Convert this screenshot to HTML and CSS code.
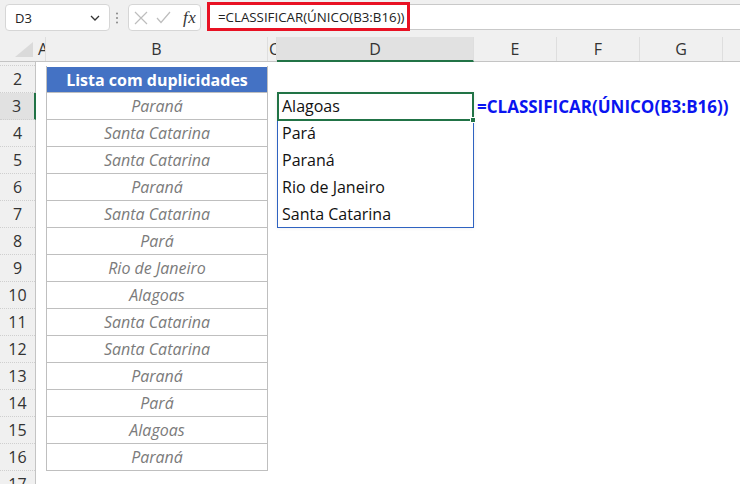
FILE: index.html
```html
<!DOCTYPE html>
<html lang="pt">
<head>
<meta charset="utf-8">
<title>CLASSIFICAR ÚNICO</title>
<link rel="stylesheet" href="styles.css">
</head>
<body>
<div class="app">
  <div class="toolbar">
    <div class="namebox">
      <span class="nb-text">D3</span>
      <svg class="chev" width="10" height="6" viewBox="0 0 10 6"><path d="M1 1 L5 5 L9 1" fill="none" stroke="#333" stroke-width="1.3"/></svg>
    </div>
    <svg class="vdots" width="4" height="12" viewBox="0 0 4 12"><circle cx="2" cy="1.5" r="1" fill="#888"/><circle cx="2" cy="6" r="1" fill="#888"/><circle cx="2" cy="10.5" r="1" fill="#888"/></svg>
    <div class="fxbox">
      <svg class="ico" width="14" height="14" viewBox="0 0 14 14"><path d="M1 1 L13 13 M13 1 L1 13" stroke="#bdbdbd" stroke-width="1.2" fill="none"/></svg>
      <svg class="ico" width="15" height="13" viewBox="0 0 15 13"><path d="M1 7 L5 11.5 L14 1" stroke="#bdbdbd" stroke-width="1.2" fill="none"/></svg>
      <span class="fx">fx</span>
    </div>
    <div class="fbar">
      <div class="fhl">=CLASSIFICAR(ÚNICO(B3:B16))</div>
    </div>
  </div>

  <div class="colheads">
    <div class="corner"><span class="tri"></span></div>
    <div class="ch ch-a"><span>A</span></div>
    <div class="ch ch-b">B</div>
    <div class="ch ch-c"><span>C</span></div>
    <div class="ch ch-d sel">D</div>
    <div class="ch ch-e">E</div>
    <div class="ch ch-f">F</div>
    <div class="ch ch-g">G</div>
    <div class="ch ch-h"></div>
  </div>

  <div class="body">
    <div class="rowheads">
      <div class="rh rh1"></div>
      <div class="rh">2</div>
      <div class="rh sel">3</div>
      <div class="rh">4</div>
      <div class="rh">5</div>
      <div class="rh">6</div>
      <div class="rh">7</div>
      <div class="rh">8</div>
      <div class="rh">9</div>
      <div class="rh">10</div>
      <div class="rh">11</div>
      <div class="rh">12</div>
      <div class="rh">13</div>
      <div class="rh">14</div>
      <div class="rh">15</div>
      <div class="rh">16</div>
      <div class="rh">17</div>
    </div>
    <div class="sheet">
      <div class="tbl">
        <div class="th">Lista com duplicidades</div>
        <div class="td">Paraná</div>
        <div class="td">Santa Catarina</div>
        <div class="td">Santa Catarina</div>
        <div class="td">Paraná</div>
        <div class="td">Santa Catarina</div>
        <div class="td">Pará</div>
        <div class="td">Rio de Janeiro</div>
        <div class="td">Alagoas</div>
        <div class="td">Santa Catarina</div>
        <div class="td">Santa Catarina</div>
        <div class="td">Paraná</div>
        <div class="td">Pará</div>
        <div class="td">Alagoas</div>
        <div class="td">Paraná</div>
      </div>
      <div class="spill">
        <div class="sc active">Alagoas<span class="handle"></span></div>
        <div class="sc">Pará</div>
        <div class="sc">Paraná</div>
        <div class="sc">Rio de Janeiro</div>
        <div class="sc">Santa Catarina</div>
      </div>
      <div class="note">=CLASSIFICAR(ÚNICO(B3:B16))</div>
    </div>
  </div>
</div>
</body>
</html>
```

FILE: styles.css
```css
* { box-sizing: border-box; }
html, body { margin: 0; padding: 0; }
body {
  width: 740px;
  height: 484px;
  overflow: hidden;
  background: #ffffff;
  font-family: "Open Sans", "Noto Sans", sans-serif;
  color: #222;
}
.app { width: 740px; height: 484px; overflow: hidden; }

/* toolbar */
.toolbar {
  height: 37px;
  background: #f0f0f0;
  display: flex;
  align-items: flex-start;
  padding: 4px 0 0 5px;
}
.namebox {
  width: 105px;
  height: 27px;
  background: #fff;
  border: 1px solid #d6d6d6;
  border-radius: 4px;
  display: flex;
  align-items: center;
  justify-content: space-between;
  padding: 0 9px 0 9px;
  font-size: 13px;
  color: #222;
}
.chev { margin-top: 1px; }
.vdots { margin: 8px 9px 0 5px; }
.fxbox {
  width: 73px;
  height: 27px;
  background: #fff;
  border: 1px solid #d6d6d6;
  border-radius: 4px;
  display: flex;
  align-items: center;
  padding: 0 0 0 5px;
  gap: 8px;
}
.fx {
  font-family: "Liberation Serif", serif;
  font-style: italic;
  font-size: 17px;
  color: #333;
  margin-left: 4px;
  letter-spacing: 0.5px;
}
.fbar {
  flex: 1;
  margin-left: 6px;
  height: 26px;
  background: #fff;
  border-top: 1px solid #c9c9c9;
  border-bottom: 1px solid #c9c9c9;
  display: flex;
}
.fhl {
  margin-top: -3px;
  height: 29px;
  width: 203px;
  border: 3px solid #e81123;
  padding: 0 0 0 8px;
  display: flex;
  align-items: center;
  font-size: 13.3px;
  color: #222;
  white-space: nowrap;
}

/* column headers */
.colheads {
  height: 25px;
  display: flex;
  background: #f0f0f0;
  border-bottom: 1px solid #c4c4c4;
}
.corner {
  width: 36px;
  position: relative;
}
.tri {
  position: absolute;
  right: 3px;
  bottom: 4px;
  width: 0;
  height: 0;
  border-left: 18px solid transparent;
  border-bottom: 15px solid #dadada;
}
.ch {
  font-size: 16px;
  color: #333;
  display: flex;
  align-items: center;
  justify-content: center;
  overflow: hidden;
  white-space: nowrap;
  border-right: 1px solid #dedede;
  background: #f0f0f0;
}
.ch-a { width: 10px; justify-content: flex-start; }
.ch-a span { margin-left: 2px; }
.ch-b { width: 222px; }
.ch-c { width: 9px; justify-content: flex-start; }
.ch-c span { margin-left: 1px; }
.ch-d { width: 197px; }
.ch-e, .ch-f, .ch-g { width: 83px; }
.ch-h { flex: 1; border-right: none; }
.ch.sel {
  background: #e1e1e1;
  border-bottom: 2px solid #217346;
  margin-bottom: -1px;
}

/* body */
.body { display: flex; }
.rowheads {
  width: 36px;
  background: #f0f0f0;
  border-right: 1px solid #c4c4c4;
  display: flex;
  flex-direction: column;
}
.rh {
  height: 27px;
  font-size: 16px;
  color: #333;
  display: flex;
  align-items: center;
  justify-content: center;
  border-bottom: 1px dotted #cfcfcf;
}
.rh1 { height: 4px; }
.rh.sel {
  background: #e1e1e1;
  border-right: 2px solid #217346;
  margin-right: -1px;
  padding-right: 1px;
}

.sheet {
  flex: 1;
  display: grid;
  grid-template-columns: 10px 222px 9px 197px 83px 83px 83px 1fr;
  grid-template-rows: 4px repeat(16, 27px);
}
.tbl {
  grid-column: 2;
  grid-row: 2 / span 15;
  border-left: 1px solid #bfbfbf;
  border-right: 1px solid #bfbfbf;
  display: flex;
  flex-direction: column;
}
.th {
  height: 27px;
  background: #4472c4;
  color: #fff;
  font-weight: 700;
  font-size: 16px;
  display: flex;
  align-items: center;
  justify-content: center;
  border-top: 1px solid #ffffff;
  border-bottom: 1px solid #bfbfbf;
  white-space: nowrap;
}
.td {
  height: 27px;
  font-style: italic;
  font-size: 16px;
  color: #7b7b7b;
  display: flex;
  align-items: center;
  justify-content: center;
  border-bottom: 1px solid #bfbfbf;
  white-space: nowrap;
}
.spill {
  grid-column: 4;
  grid-row: 3 / span 5;
  border: 1px solid #2f63c1;
  border-top: none;
  box-shadow: 0 0 4px rgba(0, 0, 0, 0.08);
  display: flex;
  flex-direction: column;
}
.sc {
  height: 27px;
  font-size: 16px;
  color: #111;
  display: flex;
  align-items: center;
  padding-left: 4px;
  white-space: nowrap;
}
.sc.active {
  position: relative;
  height: 29px;
  margin: -1px -1px -1px -1px;
  border: 2px solid #217346;
  padding-left: 3px;
}
.handle {
  position: absolute;
  right: -4px;
  bottom: -4px;
  width: 6px;
  height: 6px;
  background: #217346;
  border: 1px solid #fff;
}
.note {
  grid-column: 5;
  grid-row: 3;
  white-space: nowrap;
  font-size: 17px;
  font-weight: 700;
  color: #0a14f0;
  display: flex;
  align-items: center;
  padding-left: 3px;
}
```
